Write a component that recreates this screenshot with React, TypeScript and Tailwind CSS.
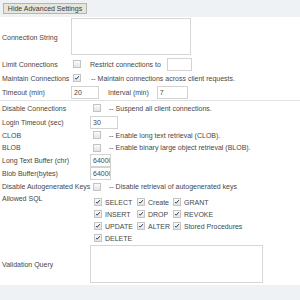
import React from 'react'

function Box({ checked = false }: { checked?: boolean }) {
  return (
    <span className="relative inline-block h-[8px] w-[8px] shrink-0 border border-[#c4c4c4] bg-gradient-to-b from-[#fbfbfb] to-[#e4e4e4]">
      {checked && (
        <svg viewBox="0 0 8 8" className="absolute inset-0 h-[6px] w-[6px]">
          <path d="M1.5 4 L3 5.6 L6.5 1.5" fill="none" stroke="#2d3a55" strokeWidth="1.3" />
        </svg>
      )}
    </span>
  )
}

function Field({ w, value = '' }: { w: string; value?: string }) {
  return (
    <span className={`flex h-[13px] items-center overflow-hidden border border-[#d3d3d3] bg-white pl-[2px] ${w}`}>
      {value}
    </span>
  )
}

const sql = [
  ['SELECT', 'Create', 'GRANT'],
  ['INSERT', 'DROP', 'REVOKE'],
  ['UPDATE', 'ALTER', 'Stored Procedures'],
  ['DELETE'],
]

export default function App() {
  return (
    <div className="h-[300px] w-[300px] overflow-hidden bg-[#eef2f4] font-['Liberation_Sans',Arial,sans-serif] text-[7px] leading-none text-[#474747]">
      <div className="h-[17px] pl-[3px] pt-[3px]">
        <button className="h-[11px] w-[84px] border border-[#b8b4a8] bg-[#e7e4d9] text-[7px] leading-none text-[#3c3c3c]">
          Hide Advanced Settings
        </button>
      </div>

      <div className="grid grid-cols-[71px_1fr] bg-white pl-[2px]">
        <div className="flex h-[40px] items-center">Connection String</div>
        <div className="-ml-[2px] h-[40px] pt-[1px]">
          <div className="h-[37px] w-[120px] border border-[#d6d6d6] bg-white" />
        </div>

        <div className="flex h-[14px] items-center">Limit Connections</div>
        <div className="flex h-[14px] items-center">
          <Box />
          <span className="ml-[9px]">Restrict connections to</span>
          <span className="ml-[6px]"><Field w="w-[25px]" /></span>
        </div>

        <div className="flex h-[14px] items-center">Maintain Connections</div>
        <div className="flex h-[14px] items-center">
          <Box checked />
          <span className="ml-[10px]">-- Maintain connections across client requests.</span>
        </div>

        <div className="flex h-[15px] items-center">Timeout (min)</div>
        <div className="-ml-[2px] flex h-[15px] items-center">
          <Field w="w-[28px]" value="20" />
          <span className="ml-[9px]">Interval (min)</span>
          <span className="ml-[8px]"><Field w="w-[31px]" value="7" /></span>
        </div>
      </div>

      <div className="h-[1px] bg-[#dfe3e6]" />

      <div className="grid grid-cols-[90px_1fr] bg-white pl-[2px]">
        <div className="flex h-[14px] items-center">Disable Connections</div>
        <div className="flex h-[14px] items-center pl-[1px]">
          <Box />
          <span className="ml-[8px]">-- Suspend all client connections.</span>
        </div>

        <div className="flex h-[14px] items-center">Login Timeout (sec)</div>
        <div className="-ml-[2px] flex h-[14px] items-center">
          <Field w="w-[28px]" value="30" />
        </div>

        <div className="flex h-[12px] items-center">CLOB</div>
        <div className="flex h-[12px] items-center pl-[1px]">
          <Box />
          <span className="ml-[8px]">-- Enable long text retrieval (CLOB).</span>
        </div>

        <div className="flex h-[13px] items-center">BLOB</div>
        <div className="flex h-[13px] items-center pl-[1px]">
          <Box />
          <span className="ml-[8px]">-- Enable binary large object retrieval (BLOB).</span>
        </div>

        <div className="flex h-[13px] items-center">Long Text Buffer (chr)</div>
        <div className="-ml-[2px] flex h-[13px] items-center">
          <Field w="w-[21px]" value="6400000" />
        </div>

        <div className="flex h-[13px] items-center">Blob Buffer(bytes)</div>
        <div className="-ml-[2px] flex h-[13px] items-center">
          <Field w="w-[21px]" value="6400000" />
        </div>

        <div className="flex h-[13px] items-center">Disable Autogenerated Keys</div>
        <div className="flex h-[13px] items-center pl-[1px]">
          <Box />
          <span className="ml-[8px]">-- Disable retrieval of autogenerated keys</span>
        </div>

        <div className="h-[50px] pt-[2px]">Allowed SQL</div>
        <div className="grid h-[50px] grid-cols-[43px_36px_auto] content-start pl-[2px] pt-[3px]">
          {sql.flatMap((row, r) =>
            row.map((name) => (
              <span key={`${r}-${name}`} className="flex h-[12px] items-center">
                <Box checked />
                <span className="ml-[3px]">{name}</span>
              </span>
            )),
          )}
        </div>

        <div className="flex h-[42px] items-center">Validation Query</div>
        <div className="-ml-[2px] h-[42px] pt-[2px]">
          <div className="h-[38px] w-[173px] border border-[#d6d6d6] bg-white" />
        </div>
      </div>
    </div>
  )
}
